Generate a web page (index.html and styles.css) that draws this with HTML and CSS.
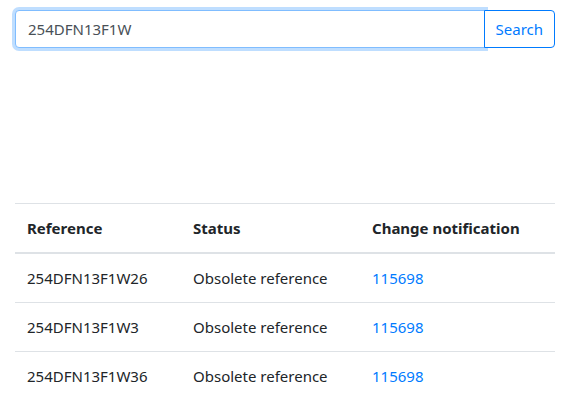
FILE: index.html
```html
<!DOCTYPE html>
<html lang="en">
<head>
    <meta charset="UTF-8">
    <meta name="viewport" content="width=device-width, initial-scale=1.0">
    <title>Reference search</title>
    <link rel="stylesheet" href="styles.css">
</head>
<body>
    <div class="container">
        <form class="search-group">
            <input type="text" class="search-input" value="254DFN13F1W">
            <button type="button" class="search-btn">Search</button>
        </form>
        <table class="results">
            <thead>
                <tr>
                    <th class="col-ref">Reference</th>
                    <th class="col-status">Status</th>
                    <th>Change notification</th>
                </tr>
            </thead>
            <tbody>
                <tr>
                    <td>254DFN13F1W26</td>
                    <td>Obsolete reference</td>
                    <td><a href="#">115698</a></td>
                </tr>
                <tr>
                    <td>254DFN13F1W3</td>
                    <td>Obsolete reference</td>
                    <td><a href="#">115698</a></td>
                </tr>
                <tr>
                    <td>254DFN13F1W36</td>
                    <td>Obsolete reference</td>
                    <td><a href="#">115698</a></td>
                </tr>
            </tbody>
        </table>
    </div>
</body>
</html>
```

FILE: styles.css
```css
body {
    margin: 0;
    font-family: "Noto Sans", "Open Sans", sans-serif;
    font-size: 15px;
    line-height: 24px;
    color: #212529;
    background-color: #fff;
}
.container {
    padding: 10px 17px 0 15px;
}
.search-group {
    display: flex;
    margin: 0 0 155px 0;
}
.search-input {
    flex: 1;
    height: 38px;
    box-sizing: border-box;
    padding: 6px 12px;
    font-family: inherit;
    font-size: 15px;
    color: #495057;
    border: 1px solid #80bdff;
    border-radius: 4px 0 0 4px;
    box-shadow: 0 0 0 3px rgba(0, 123, 255, 0.25);
    outline: none;
}
.search-btn {
    height: 38px;
    padding: 6px 11px;
    font-family: inherit;
    font-size: 15px;
    color: #007bff;
    background-color: #fff;
    border: 1px solid #007bff;
    border-radius: 0 4px 4px 0;
    margin-left: -1px;
    cursor: pointer;
}
.results {
    width: 100%;
    border-collapse: collapse;
}
.results th, .results td {
    padding: 12px;
    text-align: left;
    vertical-align: top;
    border-top: 1px solid #dee2e6;
}
.results th {
    font-weight: bold;
    border-bottom: 2px solid #dee2e6;
}
.results thead th {
    border-top: 1px solid #dee2e6;
}
.col-ref {
    width: 142px;
}
.col-status {
    width: 155px;
}
.results a {
    color: #007bff;
    text-decoration: none;
}
```
